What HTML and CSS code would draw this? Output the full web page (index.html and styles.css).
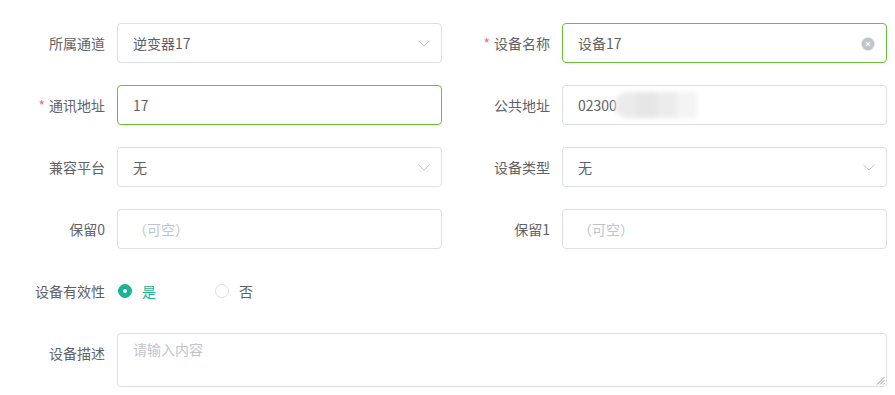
FILE: index.html
```html
<!DOCTYPE html>
<html lang="zh">
<head>
<meta charset="utf-8">
<link rel="stylesheet" href="styles.css">
</head>
<body>
<form class="form">
  <div class="row">
    <div class="item">
      <label class="label">所属通道</label>
      <div class="control">
        <div class="input select"><span class="val">逆变器17</span>
          <svg class="chev" width="12" height="7" viewBox="0 0 12 7"><path d="M0.5 0.8 L6 6 L11.5 0.8" fill="none" stroke="#c0c4cc" stroke-width="1"/></svg>
        </div>
      </div>
    </div>
    <div class="item">
      <label class="label"><span class="req">*</span>设备名称</label>
      <div class="control">
        <div class="input ok"><span class="val">设备17</span>
          <svg class="clear" width="14" height="14" viewBox="0 0 14 14"><circle cx="7" cy="7" r="6.5" fill="#c0c4cc"/><path d="M4.8 4.8 L9.2 9.2 M9.2 4.8 L4.8 9.2" stroke="#fff" stroke-width="1.2"/></svg>
        </div>
      </div>
    </div>
  </div>
  <div class="row">
    <div class="item">
      <label class="label"><span class="req">*</span>通讯地址</label>
      <div class="control"><div class="input ok"><span class="val">17</span></div></div>
    </div>
    <div class="item">
      <label class="label">公共地址</label>
      <div class="control"><div class="input"><span class="val">02300</span><span class="mosaic"><i class="m1"></i><i class="m2"></i><i class="m3"></i><i class="m4"></i></span></div></div>
    </div>
  </div>
  <div class="row">
    <div class="item">
      <label class="label">兼容平台</label>
      <div class="control">
        <div class="input select"><span class="val">无</span>
          <svg class="chev" width="12" height="7" viewBox="0 0 12 7"><path d="M0.5 0.8 L6 6 L11.5 0.8" fill="none" stroke="#c0c4cc" stroke-width="1"/></svg>
        </div>
      </div>
    </div>
    <div class="item">
      <label class="label">设备类型</label>
      <div class="control">
        <div class="input select"><span class="val">无</span>
          <svg class="chev" width="12" height="7" viewBox="0 0 12 7"><path d="M0.5 0.8 L6 6 L11.5 0.8" fill="none" stroke="#c0c4cc" stroke-width="1"/></svg>
        </div>
      </div>
    </div>
  </div>
  <div class="row">
    <div class="item">
      <label class="label">保留0</label>
      <div class="control"><div class="input"><span class="ph">（可空）</span></div></div>
    </div>
    <div class="item">
      <label class="label">保留1</label>
      <div class="control"><div class="input"><span class="ph">（可空）</span></div></div>
    </div>
  </div>
  <div class="row">
    <div class="item">
      <label class="label">设备有效性</label>
      <div class="control radios">
        <span class="radio checked"><span class="dot"></span><span class="rtext">是</span></span>
        <span class="radio"><span class="dot"></span><span class="rtext">否</span></span>
      </div>
    </div>
  </div>
  <div class="row full">
    <div class="item">
      <label class="label">设备描述</label>
      <div class="control"><div class="textarea"><span class="ph">请输入内容</span>
        <svg class="grip" width="9" height="9" viewBox="0 0 9 9"><path d="M8.5 1 L1 8.5 M8.5 4 L4 8.5 M8.5 7 L7 8.5" stroke="#777" stroke-width="0.8"/></svg>
      </div></div>
    </div>
  </div>
</form>
</body>
</html>
```

FILE: styles.css
```css
* { box-sizing: border-box; }
html, body { margin: 0; padding: 0; background: #fff; }
body {
  width: 895px;
  height: 395px;
  overflow: hidden;
  font-family: "Noto Sans CJK SC", "Noto Sans", sans-serif;
  font-size: 14px;
  color: #606266;
}
.form {
  padding: 23px 8px 0 17px;
  width: 895px;
}
.row {
  display: grid;
  grid-template-columns: 425px 425px;
  column-gap: 20px;
  margin-bottom: 22px;
}
.row.full { grid-template-columns: 870px; }
.item {
  display: flex;
  min-width: 0;
}
.label {
  width: 100px;
  flex: none;
  text-align: right;
  padding-right: 12px;
  line-height: 40px;
  color: #606266;
}
.req {
  color: #f56c6c;
  margin-right: 4px;
}
.control {
  flex: 1;
  min-width: 0;
}
.input {
  position: relative;
  height: 40px;
  border: 1px solid #dcdfe6;
  border-radius: 4px;
  padding: 0 15px;
  display: flex;
  align-items: center;
  background: #fff;
}
.input.ok { border-color: #67c23a; }
.val { color: #606266; }
.ph { color: #c0c4cc; }
.chev {
  position: absolute;
  right: 11px;
  top: 16px;
}
.clear {
  position: absolute;
  right: 11px;
  top: 13px;
}
.mosaic {
  position: relative;
  display: inline-flex;
  height: 26px;
  width: 82px;
  margin-left: -2px;
  filter: blur(2.5px);
}
.mosaic i { display: block; height: 26px; }
.mosaic .m1 { width: 20px; background: #ebebeb; border-radius: 13px 0 0 13px; }
.mosaic .m2 { width: 22px; background: #e6e6e6; }
.mosaic .m3 { width: 20px; background: #ececec; }
.mosaic .m4 { width: 20px; background: #f4f4f4; }
.radios {
  display: flex;
  align-items: center;
  height: 40px;
}
.radio {
  display: inline-flex;
  align-items: center;
  margin-right: 58px;
}
.dot {
  width: 14px;
  height: 14px;
  border-radius: 50%;
  border: 1px solid #dcdfe6;
  background: #fff;
  position: relative;
  margin-left: 1px;
}
.radio.checked .dot {
  border-color: #1ab394;
  background: #1ab394;
}
.radio.checked .dot::after {
  content: "";
  position: absolute;
  width: 4px;
  height: 4px;
  border-radius: 50%;
  background: #fff;
  left: 4px;
  top: 4px;
}
.rtext {
  padding-left: 10px;
  color: #606266;
}
.radio.checked .rtext { color: #1ab394; }
.textarea {
  position: relative;
  height: 54px;
  border: 1px solid #dcdfe6;
  border-radius: 4px;
  padding: 5px 15px;
  line-height: 21px;
}
.grip {
  position: absolute;
  right: 1px;
  bottom: 1px;
}
```
